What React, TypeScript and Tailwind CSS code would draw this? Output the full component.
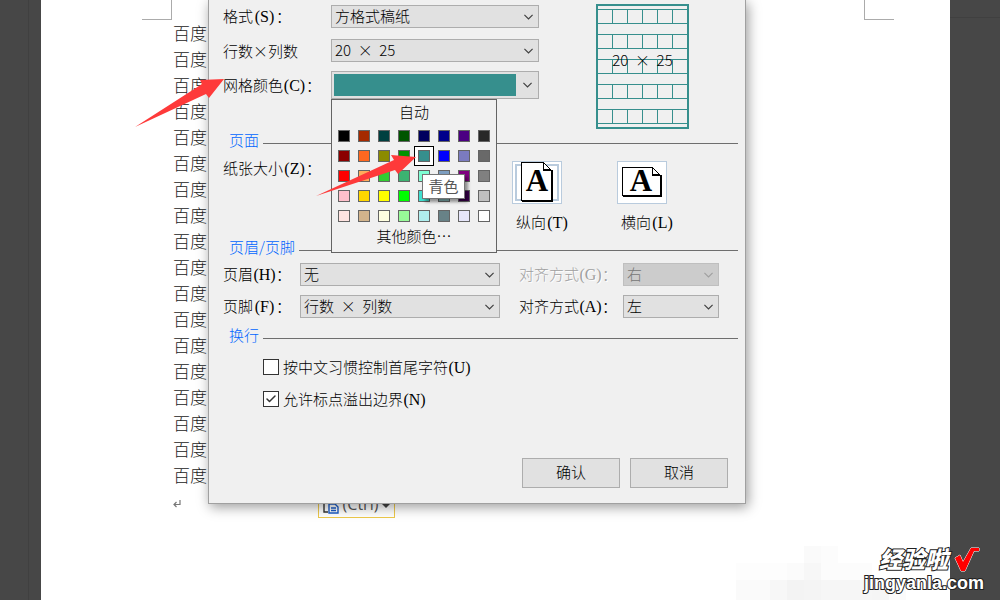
import React from "react";
import { Check } from "lucide-react";

const swatches = [
  ["#000000", "#a52a00", "#004040", "#005500", "#00005e", "#00008b", "#4b0082", "#282828"],
  ["#8b0000", "#ff6820", "#8b8b00", "#009300", "#368f8d", "#0000ff", "#7b7bc0", "#696969"],
  ["#ff0000", "#ffad5b", "#32cd32", "#3cb371", "#7fffd4", "#7d9ec0", "#800080", "#808080"],
  ["#ffc0cb", "#ffd700", "#ffff00", "#00ff00", "#40e0d0", "#82b4b4", "#3c0050", "#c0c0c0"],
  ["#ffe4e1", "#d2b48c", "#ffffe0", "#98fb98", "#afeeee", "#688287", "#e6e6fa", "#ffffff"],
];

const GRID_ROWS = [5, 30, 55, 80, 105];
const GRID_COLS = [16, 31, 46, 61, 76];

// faint mosaic tiles in the bottom corner of the page
const tiles = [
  [0, 34, 68, 20, 0.02], [51, 17, 17, 37, 0.015], [68, 0, 17, 54, 0.02], [85, 0, 17, 54, 0.01],
  [85, 34, 68, 20, 0.025], [34, 34, 51, 20, 0.01], [102, 17, 34, 37, 0.01], [68, 17, 17, 37, 0.01],
  [0, 17, 51, 17, 0.008], [136, 34, 34, 20, 0.015],
];

const Key = ({ k }: { k: string }) => (
  <span className="inline-block w-[23px] text-center font-['Liberation_Serif',serif] text-base leading-5">({k})</span>
);

const Chevron = () => (
  <svg className="w-[9px] h-[6px]" viewBox="0 0 9 6" fill="none" stroke="currentColor" strokeWidth="1.2">
    <path d="M0.4 0.8L4.5 4.9L8.6 0.8" />
  </svg>
);

const Select = ({ id, value, className, disabled = false }: {
  id: string; value: string; className: string; disabled?: boolean;
}) => (
  <div className={`relative h-[23px] ${className} ${disabled ? "text-[#a0a0a0]" : "text-[#404040]"}`}>
    <select
      id={id}
      disabled={disabled}
      className="appearance-none block w-full h-full pl-[3px] pb-0.5 border border-[#adadad] bg-[#e1e1e1] text-black leading-5 disabled:bg-[#cccccc] disabled:border-[#bfbfbf] disabled:text-[#777777] disabled:opacity-100"
    >
      <option>{value}</option>
    </select>
    <div className="absolute right-1.5 inset-y-0 flex items-center pointer-events-none">
      <Chevron />
    </div>
  </div>
);

const SectionTitle = ({ children }: { children: React.ReactNode }) => (
  <div className="flex items-start h-5 pl-1.5">
    <h2 className="text-[#0066ff] leading-5 mr-1">{children}</h2>
    <hr className="flex-1 mt-[13px] border-[#6e6e6e]" />
  </div>
);

const GridPreview = () => (
  <div className="relative mt-1 ml-[57px] w-[93px] h-[125px]">
    <svg width="93" height="125" fill="none" stroke="#368f8d" shapeRendering="crispEdges">
      <rect x="1" y="1" width="91" height="123" strokeWidth="2" />
      {GRID_ROWS.map((y) => (
        <g key={y}>
          <path d={`M2 ${y + 0.5}H91M2 ${y + 14.5}H91`} />
          {GRID_COLS.map((x) => (
            <path key={x} d={`M${x + 0.5} ${y}V${y + 14}`} />
          ))}
        </g>
      ))}
    </svg>
    <span className="absolute inset-0 flex items-center justify-center pb-3.5 whitespace-pre">{"20\u00a0\u00a0×\u00a0\u00a025"}</span>
  </div>
);

const PortraitIcon = () => (
  <svg width="50" height="43" viewBox="0 0 50 43" shapeRendering="crispEdges">
    <rect x="0.5" y="0.5" width="49" height="42" fill="#fff" stroke="#b9cbdd" />
    <rect x="4" y="4" width="42" height="35" fill="#fff" stroke="#b9cbdd" strokeWidth="2" />
    <path d="M10 41V39H39V9H41V41Z" fill="#000" />
    <path d="M9.5 1.5H31.5L39.5 9.5V39.5H9.5Z" fill="#fff" stroke="#000" />
    <path d="M31.5 1.5V9.5H39.5M31.5 8.5H38.5" fill="none" stroke="#000" />
    <path d="M31.5 1.5L39.5 9.5" stroke="#000" />
    <text x="25" y="30" textAnchor="middle" className="font-['Liberation_Serif',serif] font-bold text-[31px]">A</text>
  </svg>
);

const LandscapeIcon = () => (
  <svg width="50" height="43" viewBox="0 0 50 43" shapeRendering="crispEdges">
    <rect x="0.5" y="0.5" width="49" height="42" fill="#fff" stroke="#b9cbdd" />
    <path d="M6 36V34H43V14H45V36Z" fill="#000" />
    <path d="M5.5 6.5H35.5L43.5 14.5V34.5H5.5Z" fill="#fff" stroke="#000" />
    <path d="M35.5 6.5V14.5H43.5M35.5 13.5H42.5" fill="none" stroke="#000" />
    <path d="M35.5 6.5L43.5 14.5" stroke="#000" />
    <text x="24" y="30" textAnchor="middle" className="font-['Liberation_Serif',serif] font-bold text-[31px]">A</text>
  </svg>
);

const ColorMenu = () => (
  <div className="absolute z-10 top-full left-0 w-[166px] h-[154px] px-0.5 border border-[#646464] bg-[#f0f0f0] flex flex-col items-center">
    <button className="h-[26px] leading-6 pb-0.5">自动</button>
    <div className="relative grid grid-cols-8">
      {swatches.flat().map((color) => (
        <button
          key={color}
          aria-label={color}
          className={`w-5 h-5 flex items-center justify-center ${color === "#368f8d" ? "border border-black bg-white" : ""}`}
        >
          <span className="w-3 h-3 border border-[#646464]" style={{ backgroundColor: color }}></span>
        </button>
      ))}
      <div className="absolute left-[88px] top-12 w-[43px] h-[25px] border border-[#767676] bg-white text-[#575757] font-normal leading-[22px] text-center shadow-[3px_3px_3px_rgba(0,0,0,0.4)]">
        青色
      </div>
    </div>
    <button className="h-6 leading-5 pb-1">其他颜色⋯</button>
  </div>
);

const Dialog = () => (
  <div
    role="dialog"
    aria-label="稿纸设置"
    className="absolute top-0 left-[208px] w-[538px] pl-[14px] pr-[7px] pb-[15px] border border-t-0 border-[#a0a0a0] bg-[#f0f0f0] font-light shadow-[2px_3px_12px_rgba(0,0,0,0.4)]"
  >
    {/* Grid settings */}
    <div className="flex h-[130px]">
      <div className="pt-[5px]">
        <div className="flex items-center">
          <label htmlFor="format" className="w-[108px]">格式<Key k="S" />：</label>
          <Select id="format" value="方格式稿纸" className="w-[208px]" />
        </div>
        <div className="flex items-center mt-[11px]">
          <label htmlFor="size" className="w-[108px] flex">行数<span className="w-[15px] text-center">×</span>列数</label>
          <Select id="size" value={"20\u00a0\u00a0×\u00a0\u00a025"} className="w-[208px]" />
        </div>
        <div className="flex items-center mt-[9px]">
          <label htmlFor="color" className="w-[108px]">网格颜色<Key k="C" />：</label>
          <div className="relative w-[208px]">
            <button id="color" className="flex items-center justify-between w-full h-7 pl-0.5 pr-1.5 border border-[#adadad] bg-[#e1e1e1] text-[#404040]">
              <span className="w-[182px] h-[22px] bg-[#368f8d]"></span>
              <Chevron />
            </button>
            <ColorMenu />
          </div>
        </div>
      </div>
      <GridPreview />
    </div>

    {/* Paper */}
    <SectionTitle>页面</SectionTitle>
    <div className="flex items-start h-[87px]">
      <span className="w-[289px] mt-2">纸张大小<Key k="Z" />：</span>
      <button className="w-[105px] mt-[11px] text-left" aria-pressed="true">
        <PortraitIcon />
        <span className="block mt-2 pl-1">纵向<Key k="T" /></span>
      </button>
      <button className="mt-[11px] text-left">
        <LandscapeIcon />
        <span className="block mt-2 pl-1">横向<Key k="L" /></span>
      </button>
    </div>

    {/* Header and footer */}
    <SectionTitle>页眉/页脚</SectionTitle>
    <div className="flex items-center mt-1.5">
      <label htmlFor="header" className="w-[77px]">页眉<Key k="H" />：</label>
      <Select id="header" value="无" className="w-[200px]" />
      <label htmlFor="header-align" className="w-[104px] ml-[19px] text-[#a0a0a0] [text-shadow:1px_1px_0_#fff]">对齐方式<Key k="G" />：</label>
      <Select id="header-align" value="右" className="w-24" disabled />
    </div>
    <div className="flex items-center mt-[9px] mb-[7px]">
      <label htmlFor="footer" className="w-[77px]">页脚<Key k="F" />：</label>
      <Select id="footer" value={"行数\u00a0\u00a0×\u00a0\u00a0列数"} className="w-[200px]" />
      <label htmlFor="footer-align" className="w-[104px] ml-[19px]">对齐方式<Key k="A" />：</label>
      <Select id="footer-align" value="左" className="w-24" />
    </div>

    {/* Line breaks */}
    <SectionTitle>换行</SectionTitle>
    <div className="flex flex-col gap-4 mt-[14px] pl-10">
      <label className="flex items-center h-4 gap-1">
        <input type="checkbox" className="appearance-none w-4 h-4 border border-[#333] bg-white" />
        <span>按中文习惯控制首尾字符<Key k="U" /></span>
      </label>
      <label className="relative flex items-center h-4 gap-1">
        <input type="checkbox" defaultChecked className="peer appearance-none w-4 h-4 border border-[#333] bg-white" />
        <Check className="absolute left-0.5 top-0.5 w-3 h-3 text-[#333] hidden peer-checked:block" strokeWidth={3} />
        <span>允许标点溢出边界<Key k="N" /></span>
      </label>
    </div>

    <div className="flex justify-end gap-2.5 mt-[51px] pr-2.5">
      <button className="w-[98px] h-[30px] pb-0.5 border border-[#adadad] bg-[#e1e1e1]">确认</button>
      <button className="w-[98px] h-[30px] pb-0.5 border border-[#adadad] bg-[#e1e1e1]">取消</button>
    </div>
  </div>
);

const Watermark = () => (
  <div className="absolute right-4 bottom-[7px] flex flex-col items-end text-white font-['Liberation_Sans','Noto_Sans_CJK_SC',sans-serif] [paint-order:stroke_fill] [-webkit-text-stroke:2px_#222]">
    <div className="flex items-center h-[26px]">
      <span className="italic font-black text-[23px] leading-6">经验啦</span>
      <svg className="w-[26px] h-[26px] ml-1.5 mr-1" viewBox="0 0 26 26">
        <path d="M1 11L6 8L9 15L17 1H25V4H20L11 24H7Z" fill="#f00" stroke="#fff" strokeWidth="1" />
      </svg>
    </div>
    <span className="font-bold text-[18px] leading-5">jingyanla.com</span>
  </div>
);

export default function App() {
  return (
    <div className="relative min-h-screen flex overflow-hidden bg-[#474747] font-['Noto_Sans_CJK_SC',sans-serif] text-[15px] leading-5 text-black">
      <div className="w-[41px] pl-7">
        <div className="w-px h-full bg-[#404040]"></div>
      </div>

      <main className="relative flex-1 bg-white">
        {/* Page corner marks */}
        <div className="flex justify-between h-5 pl-[101px] pr-[56px]">
          <div className="w-[30px] border-r border-b border-[#ababab]"></div>
          <div className="w-[30px] border-l border-b border-[#ababab]"></div>
        </div>
        <div className="pl-[132px] text-[17px] leading-[26px] font-light text-[#222]">
          {Array.from({ length: 18 }, (_, i) => (
            <p key={i}>百度</p>
          ))}
          <svg className="mt-3 w-2 h-2" viewBox="0 0 8 8" fill="none" stroke="#777" strokeWidth="1.2">
            <path d="M7 0V4.5H1M3.5 2L1 4.5L3.5 7" />
          </svg>
        </div>
        <button className="absolute left-[277px] top-[494px] w-[77px] h-6 flex items-center justify-center gap-1 border border-[#edc94b] text-base text-[#555]">
          <svg className="w-4 h-4" viewBox="0 0 16 16" fill="none" strokeWidth="1.4">
            <path d="M5 14H1V2H10V5" stroke="#333" />
            <path d="M6 6H12L15 9V15H6ZM8 10H13M8 12.5H13" stroke="#1b5cc8" />
          </svg>
          <span className="font-['Open_Sans',sans-serif] leading-4 pb-1">(Ctrl)</span>
          <svg className="w-2 h-1" viewBox="0 0 8 4">
            <path d="M0 0H8L4 4Z" fill="#444" />
          </svg>
        </button>
        <svg className="absolute right-[44px] bottom-0" width="170" height="54">
          {tiles.map(([x, y, w, h, o], i) => (
            <rect key={i} x={x} y={y} width={w} height={h} fillOpacity={o} />
          ))}
        </svg>
      </main>

      <div className="w-[50px]">
        <div className="h-[18px] border-b border-[#404040]"></div>
      </div>

      <Dialog />

      {/* Pointer arrows */}
      <svg className="absolute left-[135px] top-[78px] z-20 pointer-events-none" width="90" height="50" fill="#fe3a3a">
        <path d="M0 49L67 6L65 2L89 1L74 20L71 16Z" />
      </svg>
      <svg className="absolute left-[315px] top-[154px] z-20 pointer-events-none" width="102" height="43" fill="#fe3a3a">
        <path d="M1 42L79 6L76 1L101 3L83 20L80 16Z" />
      </svg>

      <Watermark />
    </div>
  );
}
